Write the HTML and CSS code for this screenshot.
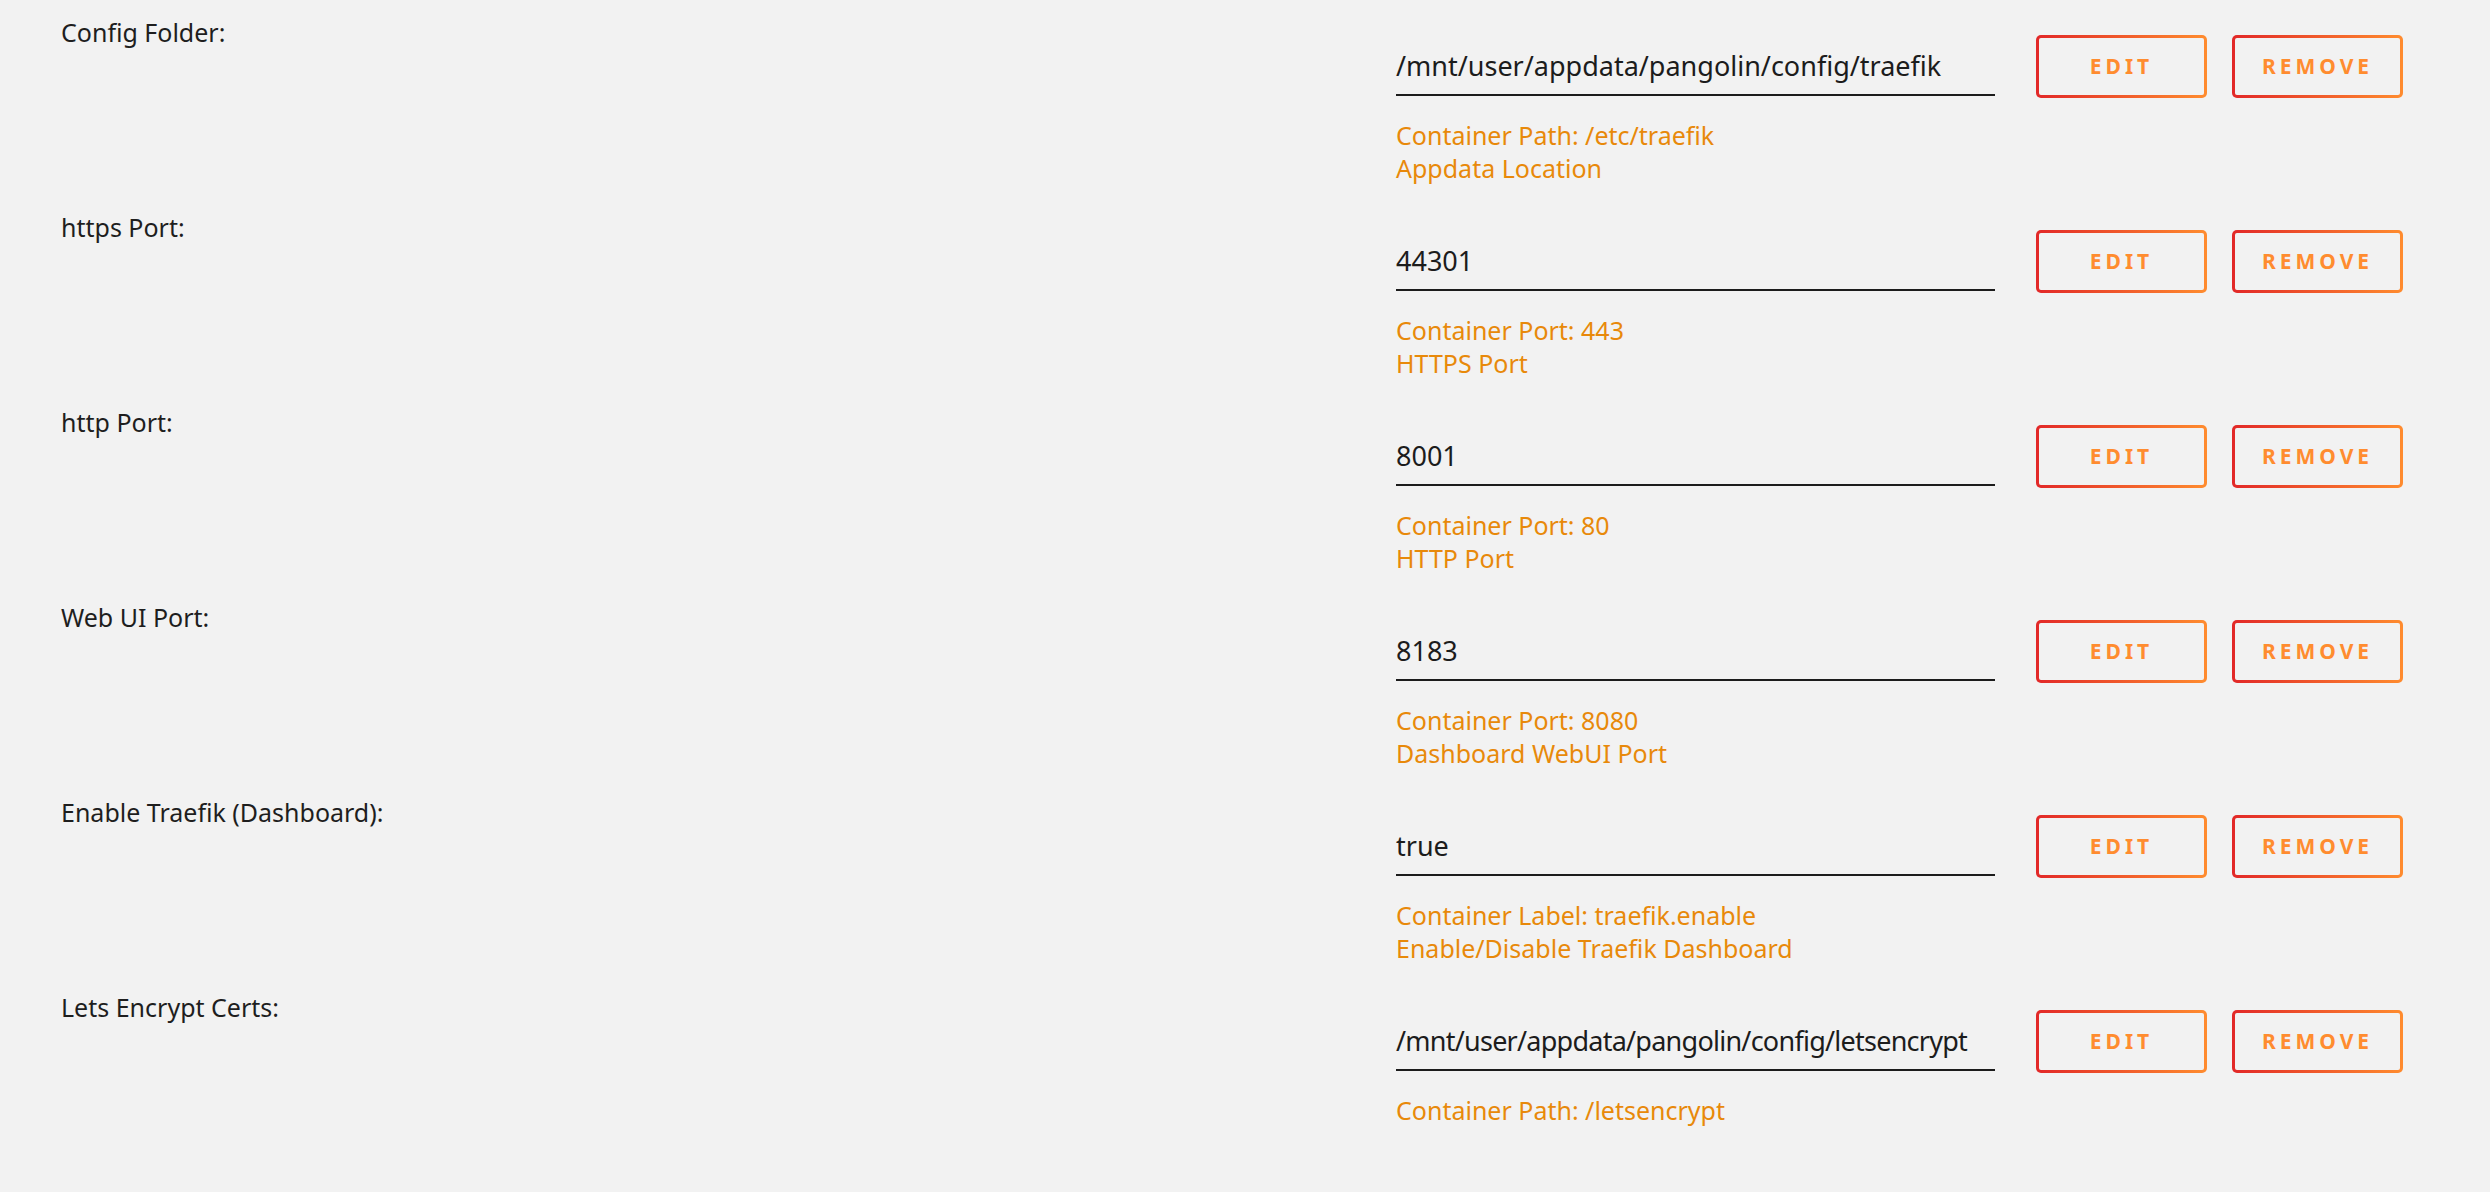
FILE: index.html
```html
<!DOCTYPE html>
<html lang="en">
<head>
<meta charset="utf-8">
<title>Container settings</title>
<link rel="stylesheet" href="styles.css">
</head>
<body>
<div class="form">
  <div class="row">
    <div class="label">Config Folder:</div>
    <div class="field">
      <div class="controls">
        <div class="value">/mnt/user/appdata/pangolin/config/traefik</div>
        <button class="btn">EDIT</button>
        <button class="btn">REMOVE</button>
      </div>
      <div class="help">
        <div>Container Path: /etc/traefik</div>
        <div>Appdata Location</div>
      </div>
    </div>
  </div>
  <div class="row">
    <div class="label">https Port:</div>
    <div class="field">
      <div class="controls">
        <div class="value">44301</div>
        <button class="btn">EDIT</button>
        <button class="btn">REMOVE</button>
      </div>
      <div class="help">
        <div>Container Port: 443</div>
        <div>HTTPS Port</div>
      </div>
    </div>
  </div>
  <div class="row">
    <div class="label">http Port:</div>
    <div class="field">
      <div class="controls">
        <div class="value">8001</div>
        <button class="btn">EDIT</button>
        <button class="btn">REMOVE</button>
      </div>
      <div class="help">
        <div>Container Port: 80</div>
        <div>HTTP Port</div>
      </div>
    </div>
  </div>
  <div class="row">
    <div class="label">Web UI Port:</div>
    <div class="field">
      <div class="controls">
        <div class="value">8183</div>
        <button class="btn">EDIT</button>
        <button class="btn">REMOVE</button>
      </div>
      <div class="help">
        <div>Container Port: 8080</div>
        <div>Dashboard WebUI Port</div>
      </div>
    </div>
  </div>
  <div class="row">
    <div class="label">Enable Traefik (Dashboard):</div>
    <div class="field">
      <div class="controls">
        <div class="value">true</div>
        <button class="btn">EDIT</button>
        <button class="btn">REMOVE</button>
      </div>
      <div class="help">
        <div>Container Label: traefik.enable</div>
        <div>Enable/Disable Traefik Dashboard</div>
      </div>
    </div>
  </div>
  <div class="row">
    <div class="label">Lets Encrypt Certs:</div>
    <div class="field">
      <div class="controls">
        <div class="value value-long">/mnt/user/appdata/pangolin/config/letsencrypt</div>
        <button class="btn">EDIT</button>
        <button class="btn">REMOVE</button>
      </div>
      <div class="help">
        <div>Container Path: /letsencrypt</div>
      </div>
    </div>
  </div>
</div>
</body>
</html>
```

FILE: styles.css
```css
html, body {
  margin: 0;
  padding: 0;
  background: #f2f2f2;
}
body {
  font-family: "Noto Sans", "Open Sans", sans-serif;
  font-size: 25px;
  color: #1c1c1c;
}
.form {
  display: flex;
  flex-direction: column;
}
.row {
  display: grid;
  grid-template-columns: 1335px auto;
  padding-left: 61px;
  height: 195px;
  box-sizing: border-box;
}
.label {
  padding-top: 15px;
  line-height: 34px;
  color: #1e1e1e;
}
.field {
  padding-top: 35px;
}
.controls {
  display: flex;
  align-items: flex-start;
}
.value {
  margin-top: 14px;
  width: 599px;
  font-size: 27px;
  line-height: 34px;
  padding-bottom: 11px;
  border-bottom: 2px solid #1c1c1c;
  white-space: nowrap;
  color: #1c1c1c;
}
.value-long {
  letter-spacing: -0.75px;
}
.btn {
  box-sizing: border-box;
  width: 171px;
  height: 63px;
  margin-left: 25px;
  padding: 0;
  border: 3px solid transparent;
  border-radius: 5px;
  background: linear-gradient(#f2f2f2, #f2f2f2) padding-box,
              linear-gradient(90deg, #e22828, #ff8c2f) border-box;
  color: #ff8c2f;
  font-family: "Noto Sans", "Open Sans", sans-serif;
  font-weight: 700;
  font-size: 21px;
  letter-spacing: 4px;
  line-height: 57px;
}
.value + .btn {
  margin-left: 41px;
}
.help {
  margin-top: 21px;
  line-height: 33px;
  color: #e8890a;
}
```
